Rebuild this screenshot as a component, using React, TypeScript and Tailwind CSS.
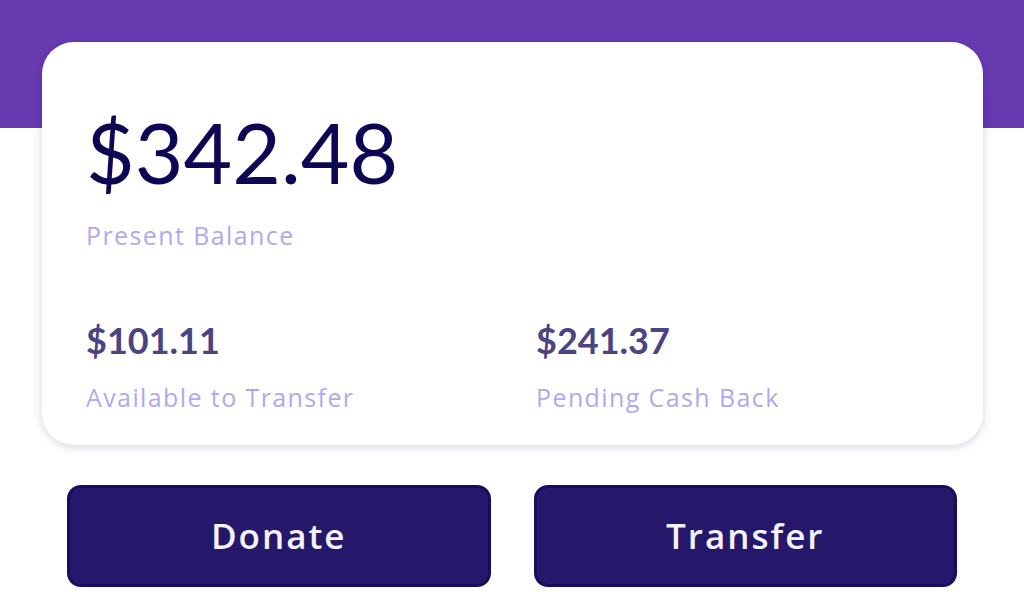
import React from "react";

const label =
  "text-[25px] leading-none tracking-[1.4px] text-[#b3a8ee] font-['Open_Sans',sans-serif]";
const btn =
  "h-[102px] rounded-[14px] bg-[#25186b] border-[3px] border-[#1a0a62] text-[#f4f2fb] text-[35px] font-semibold font-['Open_Sans',sans-serif] tracking-[2px]";

export default function App() {
  return (
    <div
      className="w-[1024px] h-[615px] overflow-hidden bg-[linear-gradient(#683bb0_0px,#673ab0_128px,#ffffff_128px)] pt-[42px]"
      style={{ fontFamily: "Lato, 'Open Sans', sans-serif" }}
    >
      <div className="mx-[42px] w-[941px] h-[403px] bg-white rounded-[32px] shadow-[0_2px_10px_rgba(40,10,90,0.18)] pl-[44px] pt-[68px]">
        <div className="text-[84px] leading-none text-[#0d0654] font-normal">$342.48</div>
        <div className={"mt-[29px] " + label}>Present Balance</div>
        <div className="mt-[74px] grid grid-cols-[450px_1fr]">
          <div>
            <div className="text-[36px] leading-none font-bold text-[#4a4484]">$101.11</div>
            <div className={"mt-[27px] " + label}>Available to Transfer</div>
          </div>
          <div>
            <div className="text-[36px] leading-none font-bold text-[#4a4484]">$241.37</div>
            <div className={"mt-[27px] " + label}>Pending Cash Back</div>
          </div>
        </div>
      </div>
      <div className="mt-[40px] px-[67px] grid grid-cols-2 gap-[43px]">
        <button className={btn}>Donate</button>
        <button className={btn}>Transfer</button>
      </div>
    </div>
  );
}
